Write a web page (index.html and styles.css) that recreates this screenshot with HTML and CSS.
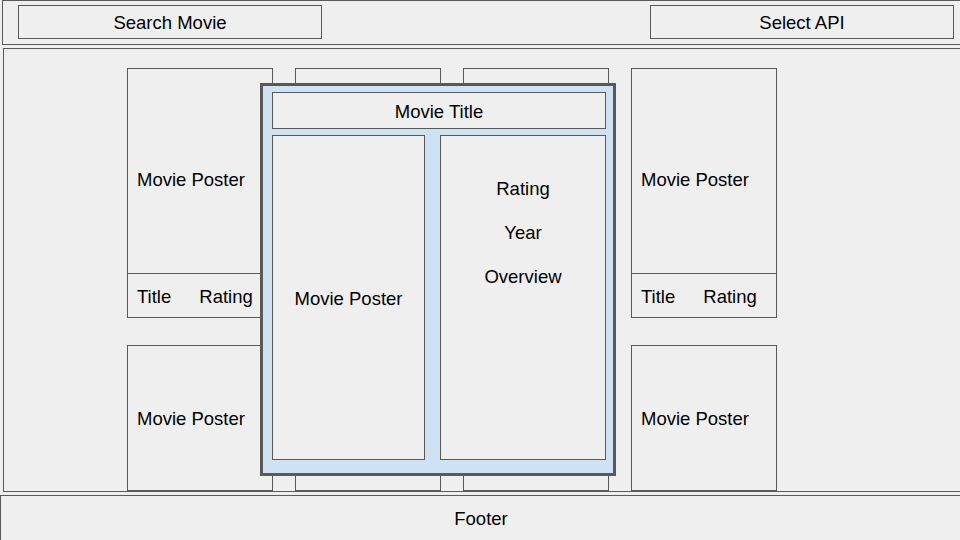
FILE: index.html
```html
<!DOCTYPE html>
<html lang="en">
<head>
    <meta charset="UTF-8">
    <meta name="viewport" content="width=device-width, initial-scale=1.0">
    <title>Movie Search Wireframe</title>
    <link rel="stylesheet" href="styles.css">
</head>
<body>
    <header class="top-bar">
        <div class="box search-box">Search Movie</div>
        <div class="box api-box">Select API</div>
    </header>

    <main class="results">
        <div class="grid">
            <div class="card">
                <div class="poster">Movie Poster</div>
                <div class="info"><span>Title</span><span>Rating</span></div>
            </div>
            <div class="card">
                <div class="poster">Movie Poster</div>
                <div class="info"><span>Title</span><span>Rating</span></div>
            </div>
            <div class="card">
                <div class="poster">Movie Poster</div>
                <div class="info"><span>Title</span><span>Rating</span></div>
            </div>
            <div class="card">
                <div class="poster">Movie Poster</div>
                <div class="info"><span>Title</span><span>Rating</span></div>
            </div>

            <div class="card">
                <div class="poster short">Movie Poster</div>
            </div>
            <div class="card">
                <div class="poster short">Movie Poster</div>
            </div>
            <div class="card">
                <div class="poster short">Movie Poster</div>
            </div>
            <div class="card">
                <div class="poster short">Movie Poster</div>
            </div>
        </div>
    </main>

    <footer class="footer">Footer</footer>

    <!-- detail popup shown over the grid -->
    <div class="modal">
        <div class="box modal-title">Movie Title</div>
        <div class="modal-body">
            <div class="box modal-poster">Movie Poster</div>
            <div class="box modal-info">
                <p>Rating</p>
                <p>Year</p>
                <p>Overview</p>
            </div>
        </div>
    </div>
</body>
</html>
```

FILE: styles.css
```css
/* General Styles */
* {
    box-sizing: border-box;
}

body {
    margin: 0;
    width: 960px;
    height: 540px;
    overflow: hidden;
    background: #efefef;
    color: #000;
    font-family: "Liberation Sans", Arial, sans-serif;
    font-size: 18.5px;
}

.box {
    border: 1px solid #595959;
    background: #efefef;
}

/* Header */
.top-bar {
    display: flex;
    justify-content: space-between;
    margin-left: 2px;
    width: 960px;
    height: 45px;
    padding: 4px 7px 0 15px;
    border: 1px solid #595959;
}

.search-box,
.api-box {
    width: 304px;
    height: 34px;
    padding-top: 2px;
    display: flex;
    align-items: center;
    justify-content: center;
}

/* Results grid */
.results {
    margin: 3px 0 0 3px;
    width: 962px;
    height: 444px;
    padding: 19px 0 0 123px;
    border: 1px solid #595959;
    overflow: hidden;
}

.grid {
    display: grid;
    grid-template-columns: repeat(4, 146px);
    column-gap: 22px;
    row-gap: 27px;
}

.card {
    border: 1px solid #595959;
}

.poster {
    height: 204px;
    padding: 17px 0 0 9px;
    display: flex;
    align-items: center;
}

.poster.short {
    height: 144px;
    padding-top: 2px;
}

.info {
    height: 44px;
    border-top: 1px solid #595959;
    padding: 2px 0 0 9px;
    display: flex;
    align-items: center;
    gap: 28px;
}

/* Footer */
.footer {
    margin-top: 3px;
    width: 962px;
    height: 47px;
    border: 1px solid #595959;
    padding-top: 1px;
    display: flex;
    align-items: center;
    justify-content: center;
}

/* Detail popup */
.modal {
    position: absolute;
    left: 260px;
    top: 83px;
    width: 356px;
    height: 393px;
    border: 3px solid #595959;
    background: #cfe2f3;
    padding: 6px 7px 0 9px;
}

.modal-title {
    height: 37px;
    padding-top: 2px;
    display: flex;
    align-items: center;
    justify-content: center;
}

.modal-body {
    display: grid;
    grid-template-columns: 153px 1fr;
    column-gap: 15px;
    margin-top: 6px;
}

.modal-poster,
.modal-info {
    height: 325px;
}

.modal-poster {
    padding-top: 2px;
    display: flex;
    align-items: center;
    justify-content: center;
}

.modal-info {
    padding-top: 31px;
    text-align: center;
}

.modal-info p {
    margin: 0;
    line-height: 44px;
}
```
